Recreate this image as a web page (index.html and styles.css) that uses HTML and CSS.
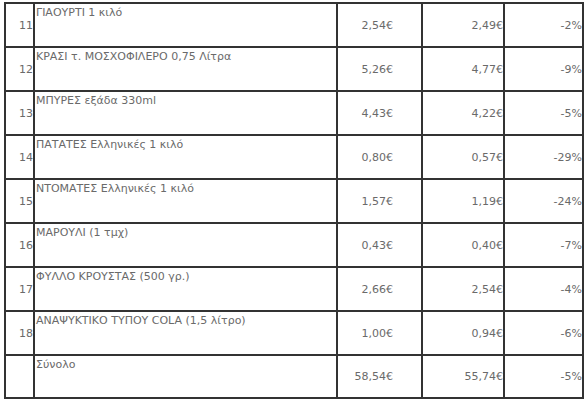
FILE: index.html
```html
<!DOCTYPE html>
<html lang="el">
<head>
  <meta charset="UTF-8" />
  <title>Τιμές</title>
  <link rel="stylesheet" href="styles.css">
</head>
<body>
  <table class="price-table">
    <colgroup>
      <col class="col-num">
      <col class="col-name">
      <col class="col-old">
      <col class="col-new">
      <col class="col-diff">
    </colgroup>
    <tr>
      <td class="num">11</td>
      <td class="name">ΓΙΑΟΥΡΤΙ 1 κιλό</td>
      <td class="old">2,54€</td>
      <td class="val">2,49€</td>
      <td class="val">-2%</td>
    </tr>
    <tr>
      <td class="num">12</td>
      <td class="name">ΚΡΑΣΙ τ. ΜΟΣΧΟΦΙΛΕΡΟ 0,75 Λίτρα</td>
      <td class="old">5,26€</td>
      <td class="val">4,77€</td>
      <td class="val">-9%</td>
    </tr>
    <tr>
      <td class="num">13</td>
      <td class="name">ΜΠΥΡΕΣ εξάδα 330ml</td>
      <td class="old">4,43€</td>
      <td class="val">4,22€</td>
      <td class="val">-5%</td>
    </tr>
    <tr>
      <td class="num">14</td>
      <td class="name">ΠΑΤΑΤΕΣ Ελληνικές 1 κιλό</td>
      <td class="old">0,80€</td>
      <td class="val">0,57€</td>
      <td class="val">-29%</td>
    </tr>
    <tr>
      <td class="num">15</td>
      <td class="name">ΝΤΟΜΑΤΕΣ Ελληνικές 1 κιλό</td>
      <td class="old">1,57€</td>
      <td class="val">1,19€</td>
      <td class="val">-24%</td>
    </tr>
    <tr>
      <td class="num">16</td>
      <td class="name">ΜΑΡΟΥΛΙ (1 τμχ)</td>
      <td class="old">0,43€</td>
      <td class="val">0,40€</td>
      <td class="val">-7%</td>
    </tr>
    <tr>
      <td class="num">17</td>
      <td class="name">ΦΥΛΛΟ ΚΡΟΥΣΤΑΣ (500 γρ.)</td>
      <td class="old">2,66€</td>
      <td class="val">2,54€</td>
      <td class="val">-4%</td>
    </tr>
    <tr>
      <td class="num">18</td>
      <td class="name">ΑΝΑΨΥΚΤΙΚΟ ΤΥΠΟΥ COLA (1,5 λίτρο)</td>
      <td class="old">1,00€</td>
      <td class="val">0,94€</td>
      <td class="val">-6%</td>
    </tr>
    <tr class="total">
      <td class="num"></td>
      <td class="name">Σύνολο</td>
      <td class="old">58,54€</td>
      <td class="val">55,74€</td>
      <td class="val">-5%</td>
    </tr>
  </table>
</body>
</html>
```

FILE: styles.css
```css
body {
  margin: 0;
  padding: 2px 0 0 4px;
  background: #fff;
  font-family: 'DejaVu Sans', Tahoma, sans-serif;
  font-size: 11px;
  color: #6a6a6a;
}

.price-table {
  border-collapse: collapse;
  table-layout: fixed;
  width: 578px;
}

.col-num { width: 29px; }
.col-name { width: 303px; }
.col-old { width: 85px; }
.col-new { width: 82px; }
.col-diff { width: 79px; }

.price-table td {
  border: 2px solid #333;
  height: 42px;
  padding: 0;
  vertical-align: middle;
  text-align: right;
  white-space: nowrap;
}

.price-table .name {
  text-align: left;
  vertical-align: top;
  padding: 2px 0 0 1px;
  height: 40px;
}

.price-table .old {
  padding-right: 28px;
}

.price-table .total td {
  height: 41px;
}

.price-table .total .name {
  height: 39px;
}
```
